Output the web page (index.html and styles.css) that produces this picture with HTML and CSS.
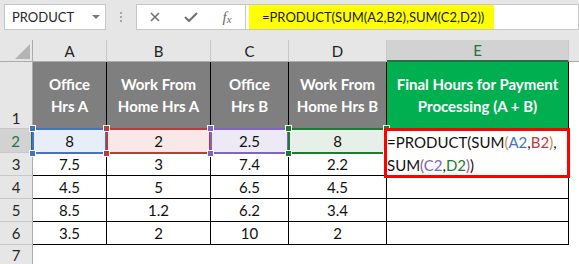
FILE: index.html
```html
<!DOCTYPE html>
<html>
<head>
<meta charset="utf-8">
<link rel="stylesheet" href="styles.css">
</head>
<body>
<div class="app">
  <header class="toolbar">
    <div class="namebox"><span class="name">PRODUCT</span><span class="caret"></span></div>
    <div class="grip"><i></i><i></i><i></i></div>
    <div class="fbtns">
      <span class="fbtn"><svg width="10" height="10" viewBox="0 0 10 10"><path d="M1 1L9 9M9 1L1 9" stroke="#707070" stroke-width="1.6" fill="none"/></svg></span>
      <span class="fbtn"><svg width="14" height="10" viewBox="0 0 14 10"><path d="M1 5L5 9L13 1" stroke="#707070" stroke-width="2" fill="none"/></svg></span>
      <span class="fbtn fx">f<span class="fx-x">x</span></span>
    </div>
    <div class="fbar"><span class="hl">=PRODUCT(SUM(A2,B2),SUM(C2,D2))</span></div>
  </header>

  <div class="sheet">
    <div class="corner"><span class="tri"></span></div>
    <div class="ch">A</div>
    <div class="ch">B</div>
    <div class="ch">C</div>
    <div class="ch">D</div>
    <div class="ch ch-sel">E</div>
    <div class="ch ch-rest"></div>

    <div class="rh rh-bottom">1</div>
    <div class="c hdr">Office<br>Hrs A</div>
    <div class="c hdr">Work From<br>Home Hrs A</div>
    <div class="c hdr">Office<br>Hrs B</div>
    <div class="c hdr">Work From<br>Home Hrs B</div>
    <div class="c hdr hdr-green">Final Hours for Payment<br>Processing (A + B)</div>
    <div class="blank"></div>

    <div class="rh rh-sel">2</div>
    <div class="c r2 r2-blue">8<span class="rng"><i class="h tl"></i><i class="h tr"></i><i class="h bl"></i><i class="h br"></i></span></div>
    <div class="c r2 r2-red">2<span class="rng"><i class="h tl"></i><i class="h tr"></i><i class="h bl"></i><i class="h br"></i></span></div>
    <div class="c r2 r2-purple">2.5<span class="rng"><i class="h tl"></i><i class="h tr"></i><i class="h bl"></i><i class="h br"></i></span></div>
    <div class="c r2 r2-green">8<span class="rng"><i class="h tl"></i><i class="h tr"></i><i class="h bl"></i><i class="h br"></i></span></div>
    <div class="c edit">
      <div class="editbox">=PRODUCT(SUM<span class="p1">(</span><span class="ra">A2</span>,<span class="rb">B2</span><span class="p1">)</span>,<br>SUM<span class="p2">(</span><span class="rc">C2</span>,<span class="rd">D2</span><span class="p2">)</span>)</div>
    </div>
    <div class="blank"></div>

    <div class="rh">3</div>
    <div class="c">7.5</div><div class="c">3</div><div class="c">7.4</div><div class="c">2.2</div><div class="c"></div><div class="blank"></div>

    <div class="rh">4</div>
    <div class="c">4.5</div><div class="c">5</div><div class="c">6.5</div><div class="c">4.5</div><div class="c"></div><div class="blank"></div>

    <div class="rh">5</div>
    <div class="c">8.5</div><div class="c">1.2</div><div class="c">6.2</div><div class="c">3.4</div><div class="c"></div><div class="blank"></div>

    <div class="rh">6</div>
    <div class="c">3.5</div><div class="c">2</div><div class="c">10</div><div class="c">2</div><div class="c"></div><div class="blank"></div>

    <div class="rh rh-last">7</div>
  </div>
</div>
</body>
</html>
```
FILE: styles.css
```css
* { box-sizing: border-box; }
body {
  margin: 0;
  font-family: Lato, "Noto Sans", sans-serif;
  background: #fff;
}
.app {
  width: 579px;
  height: 264px;
  overflow: hidden;
}

/* ---------- formula bar ---------- */
.toolbar {
  height: 40px;
  background: #e6e6e6;
  display: flex;
  align-items: flex-start;
  padding: 4px 0 0 4px;
}
.namebox {
  width: 102px;
  height: 26px;
  border: 1px solid #c6c6c6;
  background: #fff;
  display: flex;
  align-items: center;
  justify-content: space-between;
  padding: 0 5px 0 7px;
}
.name {
  font-size: 13px;
  color: #262626;
}
.caret {
  width: 0;
  height: 0;
  border-left: 4px solid transparent;
  border-right: 4px solid transparent;
  border-top: 4px solid #7a7a7a;
}
.grip {
  width: 30px;
  height: 26px;
  display: flex;
  flex-direction: column;
  align-items: center;
  justify-content: center;
  gap: 2px;
}
.grip i {
  width: 2px;
  height: 2px;
  background: #a6a6a6;
}
.fbtns {
  width: 110px;
  height: 26px;
  border: 1px solid #c6c6c6;
  background: #fff;
  display: flex;
}
.fbtn {
  width: 36px;
  display: flex;
  align-items: center;
  justify-content: center;
}
.fx {
  font-family: "Liberation Serif", serif;
  font-style: italic;
  font-size: 15px;
  color: #6a6a6a;
}
.fx-x {
  font-size: 11px;
  margin-top: 3px;
}
.fbar {
  flex: 1;
  height: 26px;
  border: 1px solid #c6c6c6;
  border-left: 0;
  background: #fff;
  padding-left: 3px;
  display: flex;
}
.hl {
  background: #ffff00;
  padding: 0 10px 0 13px;
  display: flex;
  align-items: center;
  font-size: 13px;
  color: #1a1a1a;
}

/* ---------- sheet ---------- */
.sheet {
  display: grid;
  grid-template-columns: 33px 74px 104px 78px 98px 182px 1fr;
  grid-template-rows: 22px 67px 24px 23px 23px 23px 23px 1fr;
  height: 224px;
  background: #fff;
  font-size: 15px;
  color: #111;
}
.corner {
  background: #e6e6e6;
  border-right: 1px solid #ababab;
  border-bottom: 1px solid #ababab;
  display: flex;
  align-items: flex-end;
  justify-content: flex-end;
  padding: 0 2px 2px 0;
}
.tri {
  width: 0;
  height: 0;
  border-left: 15px solid transparent;
  border-bottom: 15px solid #b4b4b4;
}
.ch {
  background: #e6e6e6;
  border-right: 1px solid #c8c8c8;
  border-bottom: 1px solid #ababab;
  display: flex;
  align-items: center;
  justify-content: center;
  color: #222;
}
.ch-sel {
  background: #d2d2d2;
  color: #217346;
  border-bottom: 2px solid #217346;
}
.ch-rest {
  border-right: 0;
}
.rh {
  grid-column: 1;
  background: #e6e6e6;
  border-right: 1px solid #ababab;
  border-bottom: 1px solid #c8c8c8;
  display: flex;
  align-items: center;
  justify-content: center;
  color: #262626;
}
.rh-bottom {
  align-items: flex-end;
  padding-bottom: 1px;
}
.rh-sel {
  background: #d2d2d2;
  color: #217346;
  border-right: 2px solid #217346;
}
.rh-last {
  border-bottom: 0;
}
.c {
  border-right: 1px solid #000;
  border-bottom: 1px solid #000;
  display: flex;
  align-items: center;
  justify-content: center;
  text-align: center;
}
.hdr {
  background: #7f7f7f;
  color: #fff;
  font-weight: 700;
  font-size: 15px;
  line-height: 22px;
}
.hdr-green {
  background: #00b050;
}
.blank {
  background: #fff;
}

/* row 2 coloured ranges */
.r2 {
  position: relative;
}
.r2-blue { background: #e8eef8; }
.r2-red { background: #f8e8e8; }
.r2-purple { background: #eeeaf5; }
.r2-green { background: #e7f0e8; }
.rng {
  position: absolute;
  top: -1px;
  left: -1px;
  right: -1px;
  bottom: -2px;
  border: 2px solid;
}
.r2-blue .rng { border-color: #4472c4; color: #4472c4; }
.r2-red .rng { border-color: #c0393b; color: #c0393b; }
.r2-purple .rng { border-color: #8064c2; color: #8064c2; }
.r2-green .rng { border-color: #1e7b34; color: #1e7b34; }
.h {
  position: absolute;
  width: 7px;
  height: 7px;
  background: currentColor;
  border: 1px solid #fff;
}
.tl { top: -5px; left: -5px; }
.tr { top: -5px; right: -5px; }
.bl { bottom: -5px; left: -5px; }
.br { bottom: -5px; right: -5px; }

/* editing cell */
.edit {
  position: relative;
}
.editbox {
  position: absolute;
  top: -1px;
  left: -3px;
  width: 186px;
  height: 50px;
  border: 3px solid #ff0000;
  background: #fff;
  z-index: 5;
  text-align: left;
  line-height: 23px;
  font-size: 15px;
  color: #111;
  white-space: nowrap;
}
.p1 { color: #d9873e; }
.p2 { color: #a4508c; }
.ra { color: #4472c4; }
.rb { color: #c0393b; }
.rc { color: #8064c2; }
.rd { color: #1e7b34; }
```
